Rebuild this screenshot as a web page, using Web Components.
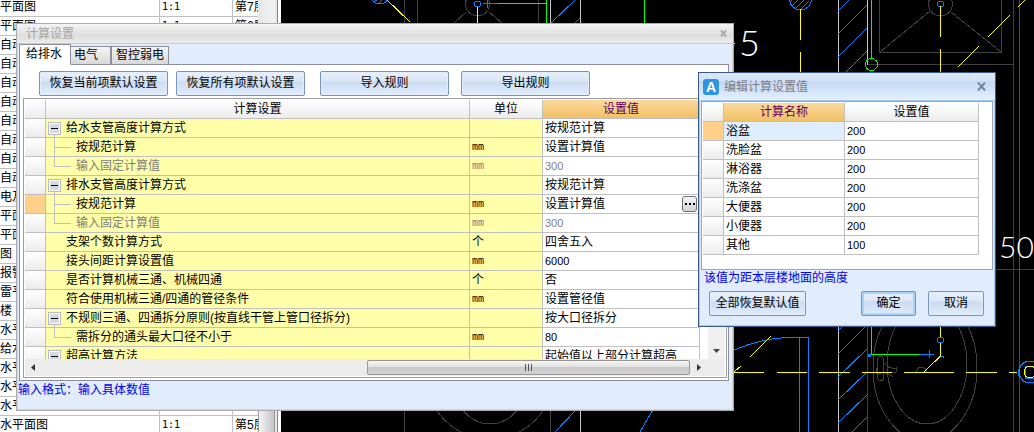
<!DOCTYPE html>
<html lang="zh-CN">
<head>
<meta charset="utf-8">
<title>计算设置</title>
<style>
html, body { height: 100%; margin: 0; }
body { background: #000; color: #000; overflow: hidden; font: 12px/18px "Liberation Sans", "Noto Sans CJK SC", sans-serif; }
</style>
</head>
<body>
<app-desktop>
  <cad-canvas slot="canvas"></cad-canvas>
  <sheet-list slot="side"></sheet-list>
  <settings-window slot="windows"></settings-window>
  <value-dialog slot="windows"></value-dialog>
</app-desktop>

<script>
const define = (name, html) => customElements.define(name, class extends HTMLElement {
  constructor() {
    super();
    this.attachShadow({ mode: 'open' }).innerHTML = typeof html === 'function' ? html(this) : html;
  }
});

const tableCss = `
  table { border-collapse: separate; border-spacing: 0; table-layout: fixed; }
  th, td { height: 18px; padding: 0 2px; font-weight: normal; line-height: 18px; white-space: nowrap; overflow: hidden;
    border-right: 1px solid #c0c0c0; border-bottom: 1px solid #c0c0c0; text-align: left; vertical-align: top; background: #fff; }
  thead th { text-align: center; background: linear-gradient(#fff, #ececec); }
  thead th.active { color: #5c0060; background: linear-gradient(#fbd99f, #f1c162); }
  .mark { background: linear-gradient(#fff, #ececec); padding: 0; }
  .mark.current { background: #ffd08a; }
  .num { font-size: 11px; }
  .mono { font: 10px/18px "DejaVu Sans Mono", monospace; }
`;
const isNum = t => /^\d+$/.test(t);

/* Desktop */
define('app-desktop', `
<style>
  :host { display: block; position: relative; height: 100%; overflow: hidden; }
  ::slotted(cad-canvas) { position: absolute; inset: 0; }
</style>
<slot name="canvas"></slot><slot name="side"></slot><slot name="windows"></slot>`);

/* Drawing area behind the windows */
define('cad-canvas', `
<style>
  :host { display: block; overflow: hidden; }
  svg { display: block; overflow: visible; }
  g, path { fill: none; }
  .y { stroke: #ffff00; } .b { stroke: #0a7fff; } .g { stroke: #00ff00; }
  .d { stroke: #404040; } .w { stroke: #c8c8c8; } .k { stroke: #008000; }
  text { fill: #fff; font-family: Lato, "Liberation Sans", sans-serif; font-weight: 300; }
</style>
<svg width="1034" height="432" aria-hidden="true">
 <g shape-rendering="crispEdges">
  <g class="d">
   <path d="M404.5 0V432M417.5 0V23M538.5 0V23M550.5 326V432M466 12L454 23M489 12L502 23"/>
   <circle cx="477.5" cy="4" r="12"/><circle cx="490" cy="375" r="64"/><ellipse cx="490" cy="366" rx="42" ry="58"/>
   <path d="M879.5 0V52.5H1001.5V0M930 11L880 52M951 12L1001 52M867 64.5H1013M1013.5 0V432M996 269.5H1034M867.5 326V432"/>
   <circle cx="940.5" cy="4" r="12"/>
   <ellipse cx="927" cy="364" rx="40" ry="60"/><ellipse cx="925" cy="368" rx="52" ry="73"/>
   <path d="M916.500 372a5 5 0 1 1 10 0M877 364c0-10 7-10 7 0c-1 5 0 8 0 12c0 7-7 5-7 0zM877 368c-2 4 0 8 4 5c5 0 7-2 10 0M884 363c3 3 5 6 12 5v4c-5 2-9-1-12 1M886 373c3 1 5 2 7 4"/>
  </g>
  <path class="w" d="M550.5 0V23M580.500 0V23M580.500 410V432M838.500 0V72M867.500 0V65M838.500 326V432"/>
  <path class="k" d="M1019.500 0V432"/>
  <g class="b">
   <ellipse cx="380" cy="-2" rx="8" ry="6"/><path d="M374 2L379-2M379 3L384-2M384 3L388-1"/>
   <circle cx="477.500" cy="4" r="3"/><path d="M483 3.500H498M487.500 0V8"/>
   <path d="M551 23L575 0M575 23L580 18M555 432L576 410M640 432Q648 418 653 410M550 412L552 410"/>
   <circle cx="800.500" cy="-1" r="11"/><path d="M792 6L799-1M796 8L805-1M801 9L809 1M790 2L793-1"/>
   <path d="M838 11L849 0M838 34L867 5M838 57L867 28M846 72L867 51"/>
   <circle cx="940.500" cy="4" r="3"/>
   <path d="M838 331L843 326M838 354L866 326M838 377L867 349M838 400L867 372M838 423L867 395M852 432L867 417"/>
   <path d="M734 350Q760 339 786 337.500H808.500V432M799.500 337V432M920 354.500H934M929.500 350V358"/>
   <path style="fill:#0a7fff" d="M868.500 354.500h2v2h-2zM941 356h2v2"/><circle cx="940.500" cy="340" r="3"/>
   <circle cx="1030" cy="372" r="11"/><path d="M1034 366h-9v12h9M1018 369v7"/>
  </g>
  <g class="g">
   <path d="M498 3.500H546.500V23M546.500 0V4M644.500 0V23M871.500 0V58M871.500 326V354.500H920"/>
   <circle cx="871.500" cy="64.500" r="6"/>
  </g>
  <g class="y">
   <path d="M386-1L410 22M477.500 7V23M800.500 9V40M800.500 52V72M940.500 6V37M940.500 49V72"/>
   <path d="M958 67L979 46M988 37L1010 15M1018 7L1026-1"/>
   <path d="M940.500 326V337M940.500 343V356L924 372M734 372L741 366M750 357L771 336"/>
   <path d="M734 372.500H764M777 372.500H807M819 372.500H850M862 372.500H892M904 372.500H954M966 372.500H997M1009 372.500H1017"/>
   <circle cx="1030" cy="372" r="6"/>
  </g>
  <path stroke="#fff" d="M733 43.500h2"/>
 </g>
 <text x="739" y="56" font-size="36">5</text>
 <text x="999" y="258" font-size="30">50</text>
</svg>`);

/* Drawing list at the left */
define('sheet-list', () => {
  const names = ['平面图','平面图','自动','自动','自动','自动','自动','自动','自动','自动','电及','平面','平面','图','报警','雷平','楼','水平','给水','水平','水平','水平面图','水平面图'];
  const floors = { 0: '第7层', 1: '第6层', 21: '第5层', 22: '第5层' };
  const rows = names.map((n, i) => `<tr><td>${n}</td><td class="mono">${floors[i] ? '1:1' : ''}</td><td>${floors[i] || ''}</td></tr>`).join('');
  return `
<style>
  :host { display: flex; position: relative; width: 281px; height: 100%; background: #fff; overflow: hidden; }
  ${tableCss}
  .view { flex: 1; overflow: hidden; }
  table { width: 100%; margin-top: -2px; }
  td { padding: 0 2px; }
  td:first-child { padding: 0; }
  td:last-child { border-right: 0; text-overflow: clip; }
  .bar { width: 17px; background: linear-gradient(90deg, #e6e6e6, #f2f2f2); display: flex; flex-direction: column; }
  .thumb { flex: 1; margin-top: 40px; border: 1px solid #979797; border-bottom: 0; background: linear-gradient(90deg, #f4f4f4, #d8d8d8 60%, #c4c4c4); }
  .edge { width: 6px; box-sizing: border-box; border-left: 2px solid #e8e8e8; border-right: 3px solid #fff; background: #5a8ac6; }
</style>
<div class="view"><table><colgroup><col style="width:160px"><col style="width:73px"><col></colgroup><tbody>${rows}</tbody></table></div>
<div class="bar"><div class="thumb"></div></div><div class="edge"></div>`;
});

/* Push button */
define('tool-button', `
<style>
  :host { display: block; }
  button { display: block; width: 100%; height: 25px; padding: 0; font: inherit; line-height: 21px; color: #000; white-space: nowrap;
    border: 1px solid #7894bb; border-radius: 2px; background: linear-gradient(#e8f0fb, #dbe6f6 40%, #cbdbf1 42%, #e0edfd); box-shadow: inset 0 0 0 1px #e4eefb; }
  :host([primary]) button { box-shadow: inset 0 0 0 2px #a9d4f7; }
</style>
<button type="button"><slot></slot></button>`);

/* Tree grid of the calculation settings */
define('settings-grid', () => {
  const data = [
    ['group', '给水支管高度计算方式', '', '按规范计算'],
    ['mid', '按规范计算', 'mm', '设置计算值'],
    ['last', '输入固定计算值', 'mm', '300', 'off'],
    ['group', '排水支管高度计算方式', '', '按规范计算'],
    ['mid', '按规范计算', 'mm', '设置计算值', 'current'],
    ['last', '输入固定计算值', 'mm', '300', 'off'],
    ['leaf', '支架个数计算方式', '个', '四舍五入'],
    ['leaf', '接头间距计算设置值', 'mm', '6000'],
    ['leaf', '是否计算机械三通、机械四通', '个', '否'],
    ['leaf', '符合使用机械三通/四通的管径条件', 'mm', '设置管径值'],
    ['group', '不规则三通、四通拆分原则(按直线干管上管口径拆分)', '', '按大口径拆分'],
    ['last', '需拆分的通头最大口径不小于', 'mm', '80'],
    ['group', '超高计算方法', '', '起始值以上部分计算超高'],
  ];
  const lead = {
    group: `<button class="fold" type="button" aria-label="折叠"><svg width="20" height="18" shape-rendering="crispEdges"><path d="M8.500 16v2" stroke="#c0c0c0"/><rect x="2.500" y="3.500" width="12" height="12" fill="#fff" stroke="#b8b8c0"/><rect x="4" y="5" width="9" height="9" fill="#d5dae0"/><path d="M5 9.500h7" stroke="#000"/></svg></button>`,
    mid: `<svg width="30" height="18" shape-rendering="crispEdges"><path d="M8.500 0v18M8 9.500h17" fill="none" stroke="#c0c0c0"/></svg>`,
    last: `<svg width="30" height="18" shape-rendering="crispEdges"><path d="M8.500 0v9.500h16.500" fill="none" stroke="#c0c0c0"/></svg>`,
    leaf: `<svg width="20" height="18"></svg>`,
  };
  const rows = data.map(([kind, name, unit, value, state = '']) => `
    <tr class="${state}"><td class="mark ${state}"></td>
    <td class="name"><div>${lead[kind]}<span>${name}</span></div></td>
    <td class="unit ${unit === 'mm' ? 'mono' : ''}">${unit}</td>
    <td class="${isNum(value) ? 'num' : ''}"><div class="value"><span>${value}</span>${state === 'current' ? '<button class="more" type="button" aria-label="更多"><svg width="10" height="2" shape-rendering="crispEdges"><path d="M0 0h2v2h-2zM4 0h2v2h-2zM8 0h2v2h-2z"/></svg></button>' : ''}</div></td></tr>`).join('');
  return `
<style>
  :host { display: block; border: 1px solid #9c9ca4; padding: 1px; background: #fff; }
  ${tableCss}
  .body { display: flex; height: 259px; }
  .view { flex: 1; overflow: hidden; }
  table { width: 675px; }
  .name, .unit { background: #ffffaa; }
  .name { padding: 0; }
  .name div, .value { display: flex; height: 18px; }
  .value { justify-content: space-between; align-items: center; }
  .off td { color: #808080; }
  .fold { border: 0; padding: 0; background: none; display: block; }
  svg { display: block; flex: none; }
  .more { width: 15px; height: 16px; padding: 0; border: 1px solid #707070; border-radius: 3px; background: linear-gradient(#f4f4f4, #d4d4d4); display: flex; align-items: center; justify-content: center; }
  .vbar { width: 17px; background: #f0f0f0; display: flex; flex-direction: column; justify-content: flex-end; align-items: center; padding-bottom: 6px; box-sizing: border-box; }
  .hbar { display: flex; align-items: center; height: 17px; background: #ececec; padding: 0 24px 0 6px; }
  .track { flex: 1; display: flex; justify-content: flex-end; padding: 0 7px 0 0; }
  .thumb { width: 323px; height: 15px; box-sizing: border-box; border: 1px solid #979797; border-radius: 2px; background: linear-gradient(#f4f4f4, #e2e2e2 45%, #cacaca 50%, #d2d2d2); display: flex; align-items: center; justify-content: center; }
</style>
<div class="body">
  <div class="view"><table>
    <colgroup><col style="width:21px"><col style="width:424px"><col style="width:73px"><col style="width:157px"></colgroup>
    <thead><tr><th class="mark"></th><th>计算设置</th><th>单位</th><th class="active">设置值</th></tr></thead>
    <tbody>${rows}</tbody></table></div>
  <div class="vbar"><svg width="7" height="4"><path d="M0 0h7L3.500 4z" fill="#444"/></svg></div>
</div>
<div class="hbar">
  <svg width="4" height="7"><path d="M4 0v7L0 3.500z" fill="#333"/></svg>
  <div class="track"><div class="thumb"><svg width="9" height="7" shape-rendering="crispEdges"><path d="M1.500 0v7M4.500 0v7M7.500 0v7" stroke="#555"/></svg></div></div>
  <svg width="4" height="7"><path d="M0 0v7L4 3.500z" fill="#333"/></svg>
</div>`;
});

/* Main settings window */
define('settings-window', `
<style>
  :host { display: block; position: absolute; left: 16px; top: 23px; width: 718px; box-sizing: border-box; background: #e1edfe;
    border: 1px solid #adadad; box-shadow: inset 0 0 0 1px #d4d4d4; }
  header { display: flex; justify-content: space-between; align-items: center; height: 19px; padding: 0 6px 0 9px;
    color: #a6a6a6; background: linear-gradient(#f4f4f4, #dedede 60%, #ececec); border-bottom: 1px solid #c9c9c9; }
  header button { border: 0; padding: 0; background: none; display: block; }
  svg { display: block; }
  main { margin: 0 4px 0 2px; }
  nav { display: flex; align-items: flex-end; height: 21px; }
  nav button { font: inherit; line-height: 17px; height: 19px; margin: 0; color: #000; border: 1px solid #8c8e9a; padding: 0 3px;
    text-align: left; background: linear-gradient(#f6f6f6, #d8d8d8); box-sizing: border-box; }
  nav .on { width: 52px; height: 21px; padding: 0 6px; background: #fff; border-bottom-color: #fff; }
  nav .second { width: 40px; border-left: 0; }
  nav .third { width: 58px; padding: 0 4px; }
  nav .rule { flex: 1; height: 1px; background: #8c8e9a; }
  section { border: 1px solid #8c8e9a; border-top: 0; background: #fff; padding: 6px 1px 2px 3px; }
  .tools { display: flex; gap: 8px; padding: 0 0 2px 16px; }
  .tools tool-button { width: 129px; }
  .tools .import { margin-left: 7px; }
  .tools .export { margin-left: 4px; }
  footer { height: 29px; padding-left: 1px; color: #0000f0; }
</style>
<header><span>计算设置</span><button type="button" aria-label="关闭"><svg width="7" height="7"><path d="M1 0.500L6 6.500M6 0.500L1 6.500" stroke="#ababab" stroke-width="2"/></svg></button></header>
<main>
  <nav><button class="on" type="button">给排水</button><button class="second" type="button">电气</button><button class="third" type="button">智控弱电</button><span class="rule"></span></nav>
  <section>
    <div class="tools"><tool-button>恢复当前项默认设置</tool-button><tool-button>恢复所有项默认设置</tool-button><tool-button class="import">导入规则</tool-button><tool-button class="export">导出规则</tool-button></div>
    <settings-grid></settings-grid>
  </section>
</main>
<footer>输入格式：输入具体数值</footer>`);

/* Dialog for editing a value */
define('value-dialog', () => {
  const rows = [['浴盆', 200], ['洗脸盆', 200], ['淋浴器', 200], ['洗涤盆', 200], ['大便器', 200], ['小便器', 200], ['其他', 100]]
    .map(([n, v], i) => `<tr><td class="mark ${i ? '' : 'current'}"></td><td class="${i ? '' : 'sel'}">${n}</td><td class="num">${v}</td></tr>`).join('');
  return `
<style>
  :host { display: block; position: absolute; left: 698px; top: 72px; width: 298px; box-sizing: border-box; background: #e1edfe;
    border: 1px solid #3a5a88; box-shadow: inset 0 0 0 1px #a9cbee; }
  ${tableCss}
  header { display: flex; align-items: center; height: 27px; padding: 0 9px 0 4px; color: #7c7c86;
    background: linear-gradient(#dbe7f8, #d3e2f7 30%, #c2d8f4 32%, #e4f0fd); border-bottom: 1px solid #a0c8f0; }
  .logo { width: 16px; height: 16px; border-radius: 3px; background: #2e95e2; color: #fff; font: bold 14px/16px "Liberation Sans", sans-serif; text-align: center; }
  h1 { flex: 1; margin: 0 0 0 5px; font: inherit; }
  header button { border: 0; padding: 0; background: none; display: block; }
  svg { display: block; }
  .frame { margin: 0 2px; border: 1px solid #a0a4ac; padding: 1px 1px 14px; background: #fff; }
  table { width: 276px; }
  .sel { background: #dfeeff; }
  p { margin: 0; padding: 0 5px; line-height: 16px; color: #0000f0; }
  .actions { display: flex; padding: 5px 11px 10px 10px; }
  .reset { width: 97px; margin-right: auto; }
  .ok { width: 55px; margin-right: 12px; }
  .cancel { width: 56px; }
</style>
<header><span class="logo">A</span><h1>编辑计算设置值</h1><button type="button" aria-label="关闭"><svg width="9" height="9"><path d="M1 0.500L8 8.500M8 0.500L1 8.500" stroke="#71869e" stroke-width="2"/></svg></button></header>
<div class="frame"><table>
  <colgroup><col style="width:21px"><col style="width:121px"><col style="width:134px"></colgroup>
  <thead><tr><th class="mark"></th><th class="active">计算名称</th><th>设置值</th></tr></thead>
  <tbody>${rows}</tbody></table></div>
<p>该值为距本层楼地面的高度</p>
<div class="actions"><tool-button class="reset">全部恢复默认值</tool-button><tool-button class="ok" primary>确定</tool-button><tool-button class="cancel">取消</tool-button></div>`;
});
</script>
</body>
</html>
